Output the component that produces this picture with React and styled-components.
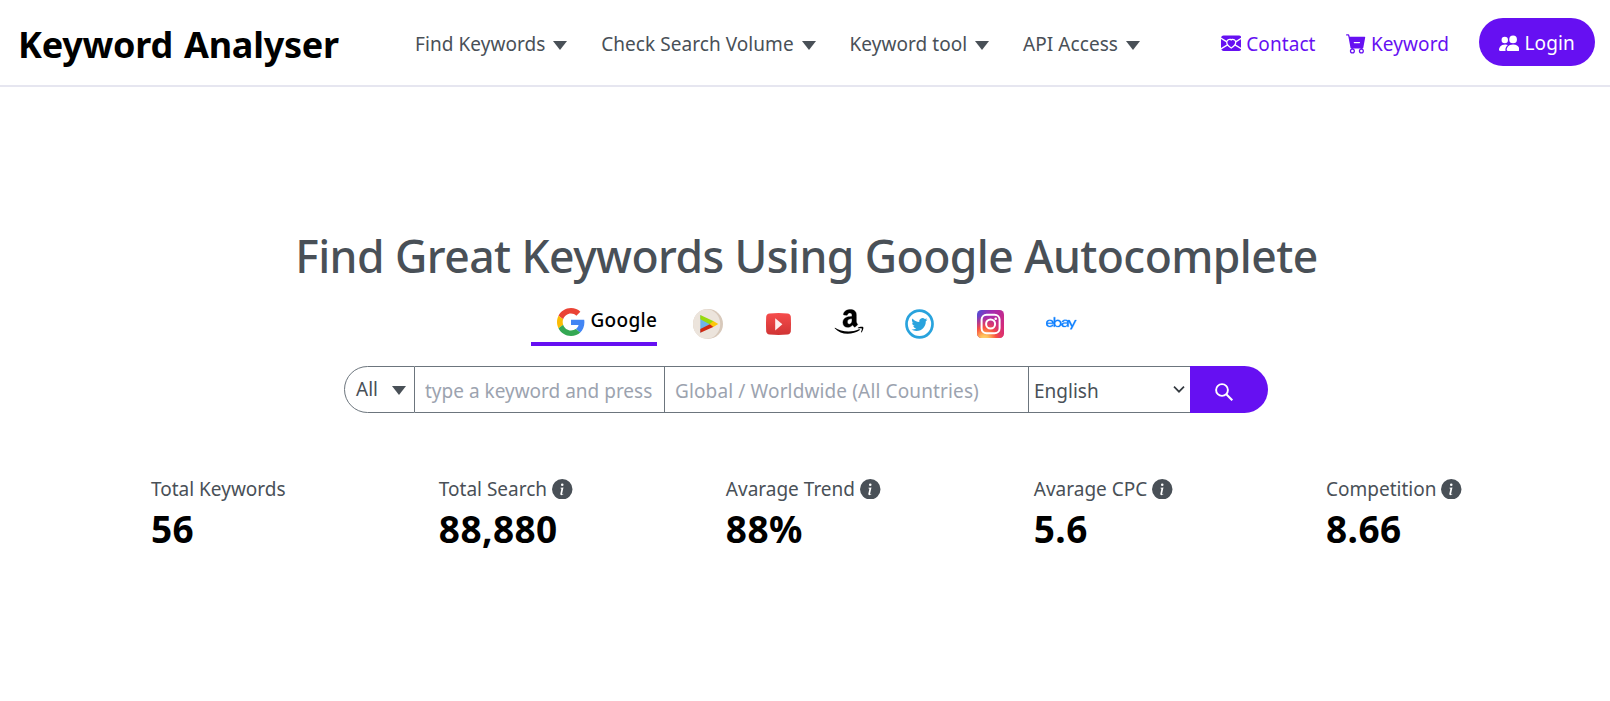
import React from 'react';
import styled, { createGlobalStyle, css } from 'styled-components';
import {
  BsEnvelopeHeartFill,
  BsCartDashFill,
  BsPeopleFill,
  BsInfoCircleFill,
} from 'react-icons/bs';
import { FaEbay } from 'react-icons/fa';

const color = {
  accent: '#6610f2',
  text: '#495057',
  muted: '#9ca3af',
  line: '#6c757d',
  rule: '#e6e6f0',
};

const GlobalStyle = createGlobalStyle`
  * { box-sizing: border-box; }
  body {
    margin: 0;
    background: #fff;
    color: ${color.text};
    font: 400 19px/28px "Noto Sans", "Open Sans", sans-serif;
    overflow: hidden;
  }
  svg { display: block; flex: none; }
`;

/* ---------- header ---------- */

const Header = styled.header`
  display: flex;
  align-items: center;
  height: 87px;
  padding: 0 15px 0 18px;
  border-bottom: 2px solid ${color.rule};
`;

const Logo = styled.h1`
  margin: 0;
  width: 397px;
  padding-top: 4px;
  font-size: 36px;
  line-height: 48px;
  font-weight: 700;
  letter-spacing: -0.25px;
  word-spacing: 2px;
  color: #000;
  white-space: nowrap;
`;

const Nav = styled.nav`
  display: flex;
  gap: 33.8px;
  padding-top: 2px;
`;

const NavItem = styled.a`
  display: flex;
  align-items: center;
  gap: 8px;
  letter-spacing: 0.06px;
  white-space: nowrap;
`;

const Caret = styled.span`
  margin-top: 3px;
  border: 7.5px solid transparent;
  border-top: 9px solid ${color.text};
  border-bottom: 0;
`;

const Actions = styled.div`
  display: flex;
  align-items: center;
  gap: 30px;
  margin-left: auto;
`;

const ActionLink = styled.a`
  display: flex;
  align-items: center;
  gap: 5px;
  padding-top: 2px;
  color: ${color.accent};
  letter-spacing: 0.08px;

  svg {
    font-size: 20.5px;
  }
`;

const LoginButton = styled.button`
  display: flex;
  align-items: center;
  gap: 5px;
  height: 48px;
  margin-bottom: 1px;
  padding: 0 20px;
  border: 0;
  border-radius: 24px;
  background: ${color.accent};
  color: #fff;
  font: inherit;
  letter-spacing: 0.15px;

  svg {
    font-size: 20.5px;
    margin-top: 2px;
  }
  span {
    padding-top: 2px;
  }
`;

/* ---------- hero ---------- */

const Hero = styled.main`
  display: flex;
  flex-direction: column;
  align-items: center;
  padding-top: 138px;
`;

const Heading = styled.h2`
  margin: 0;
  padding-left: 3px;
  font-size: 44.5px;
  line-height: 61px;
  font-weight: 500;
  letter-spacing: -0.56px;
  white-space: nowrap;
`;

const Tabs = styled.div`
  display: flex;
  gap: 35.5px;
  height: 46px;
  margin-top: 14px;
  padding-right: 3px;
`;

const ActiveTab = styled.div`
  display: flex;
  align-items: flex-start;
  gap: 6px;
  width: 126.5px;
  padding: 6px 0 0 26px;
  border-bottom: 4px solid ${color.accent};
  color: #000;
  font-weight: 500;
  letter-spacing: 0.3px;

  svg {
    margin-top: 2px;
  }
`;

const SourceList = styled.div`
  display: flex;
  gap: 40.8px;
  height: 48px;
`;

const Source = styled.a`
  display: flex;
  align-items: center;
  justify-content: center;
  width: 30px;
`;

const EbayIcon = styled(FaEbay)`
  font-size: 30.5px;
  color: #0f80ff;
  stroke: #0f80ff;
  stroke-width: 6px;
  margin-bottom: 2px;
`;

/* ---------- search bar ---------- */

const SearchBar = styled.form`
  display: flex;
  height: 47px;
  margin-top: 20px;
  margin-left: 2px;
`;

const cell = css`
  border: 1px solid ${color.line};
  border-left: 0;
  background: #fff;
`;

const Scope = styled.div`
  ${cell}
  display: flex;
  align-items: center;
  justify-content: space-between;
  width: 71px;
  padding: 0 8px 2px 11px;
  border-left: 1px solid ${color.line};
  border-radius: 24px 0 0 24px;
`;

const Field = styled.input`
  ${cell}
  width: ${(p) => p.$width}px;
  padding: 3px 0 0 10px;
  border-radius: 0;
  outline: 0;
  font: inherit;
  letter-spacing: ${(p) => p.$tracking || 0}px;
  color: ${color.text};

  &::placeholder {
    color: ${color.muted};
    opacity: 1;
  }
`;

const Language = styled.label`
  ${cell}
  display: flex;
  align-items: center;
  width: 161px;
  padding-right: 5px;
  border-right: 0;
`;

const LanguageSelect = styled.select`
  flex: 1;
  padding: 3px 0 0 5px;
  border: 0;
  outline: 0;
  appearance: none;
  background: none;
  font: inherit;
  color: ${color.text};
`;

const SearchButton = styled.button`
  display: flex;
  align-items: center;
  width: 78px;
  padding: 5px 0 0 24.5px;
  border: 0;
  border-radius: 0 24px 24px 0;
  background: ${color.accent};
  color: #fff;
`;

/* ---------- stats ---------- */

const Stats = styled.section`
  display: flex;
  justify-content: space-between;
  width: 100%;
  margin-top: 62px;
  padding: 0 148px 0 151px;
`;

const StatLabel = styled.div`
  display: flex;
  align-items: center;
  gap: 5px;
  white-space: nowrap;

  svg {
    font-size: 20.5px;
  }
`;

const StatValue = styled.div`
  padding-top: 1px;
  font-size: 37px;
  line-height: 49px;
  font-weight: 700;
  letter-spacing: 0.4px;
  color: #000;
`;

/* ---------- brand icons ---------- */

const GoogleIcon = () => (
  <svg width="28" height="28" viewBox="0 0 48 48">
    <path fill="#EA4335" d="M24 9.5c3.54 0 6.71 1.22 9.21 3.6l6.85-6.85C35.9 2.38 30.47 0 24 0 14.62 0 6.51 5.38 2.56 13.22l7.98 6.19C12.43 13.72 17.74 9.5 24 9.5z" />
    <path fill="#4285F4" d="M46.98 24.55c0-1.57-.15-3.09-.38-4.55H24v9.02h12.94c-.58 2.96-2.26 5.48-4.78 7.18l7.73 6c4.51-4.18 7.09-10.36 7.09-17.65z" />
    <path fill="#FBBC05" d="M10.53 28.59c-.48-1.45-.76-2.99-.76-4.59s.27-3.14.76-4.59l-7.98-6.19C.92 16.46 0 20.12 0 24c0 3.88.92 7.54 2.56 10.78l7.97-6.19z" />
    <path fill="#34A853" d="M24 48c6.48 0 11.93-2.13 15.89-5.81l-7.73-6c-2.15 1.45-4.92 2.3-8.16 2.3-6.26 0-11.57-4.22-13.47-9.91l-7.98 6.19C6.51 42.62 14.62 48 24 48z" />
  </svg>
);

const PlayIcon = () => (
  <svg width="30" height="30" viewBox="0 0 30 30">
    <circle cx="15" cy="15" r="15" fill="#d8c9bb" />
    <ellipse cx="13.6" cy="15" rx="13.6" ry="14.8" fill="#ece4dc" />
    <path d="M7.3 6v18l10-9z" fill="#6db4ea" />
    <path d="M7.3 6l13.4 6.3-3.6 3.2-9.8-5.2z" fill="#98da0c" />
    <path d="M7.3 23.7l13.4-5.9-3.4-2.9-10 5z" fill="#cf2a12" />
    <path d="M20.3 12.1l5 2.9-5 3-3.5-3z" fill="#fcc80a" />
  </svg>
);

const YoutubeIcon = () => (
  <svg width="25" height="22" viewBox="0 0 25 22">
    <defs>
      <linearGradient id="yt" x2="0" y2="1">
        <stop offset="0" stopColor="#f64c4c" />
        <stop offset="1" stopColor="#d03434" />
      </linearGradient>
    </defs>
    <path d="M3.500 .4Q12.500 -.4 21.500 .4q3 .3 3.300 3.300.4 7.300 0 14.600-.3 3-3.300 3.300-9 .8-18 0-3-.3-3.300-3.300-.4-7.300 0-14.600Q.5.7 3.500 .4z" fill="url(#yt)" />
    <path d="M9.200 5.200v12.300l7.200-6.200z" fill="#fdeeee" />
  </svg>
);

const AmazonIcon = () => (
  <svg width="30" height="30" viewBox="0 0 30 30">
    <g transform="translate(4.600 .6) scale(1.460)">
      <path
        fillRule="evenodd"
        stroke="#000"
        strokeWidth=".25"
        d="M10.813 11.968c.157.083.36.074.5-.05l.005.005a90 90 0 0 1 1.623-1.405c.173-.143.143-.372.006-.563l-.125-.17c-.345-.465-.673-.906-.673-1.791v-3.300l.001-.335c.008-1.265.014-2.421-.933-3.305C10.404.274 9.060 0 8.030 0 6.017 0 3.770.750 3.296 3.240c-.047.264.143.404.316.443l2.054.220c.190-.009.330-.196.366-.387.176-.857.896-1.271 1.703-1.271.435 0 .929.160 1.188.550.264.390.260.910.257 1.376v.432q-.3.033-.621.065c-1.113.114-2.397.246-3.360.670C3.873 5.910 2.940 7.080 2.940 8.798c0 2.200 1.387 3.298 3.168 3.298 1.506 0 2.328-.354 3.489-1.540l.167.246c.274.405.456.675 1.047 1.166zM6.030 8.431C6.030 6.627 7.647 6.300 9.177 6.300v.570c.001.776.002 1.434-.396 2.133-.336.595-.870.961-1.465.961-.812 0-1.286-.619-1.286-1.533"
      />
    </g>
    <path d="M1 18.700c5.500 3.700 15.500 5.600 24 1.600.9-.3 1.300.3.600.9-3.200 2.300-7.600 3.500-12 3.500-5 0-9.400-1.900-12.700-5.300-.4-.4-.3-.9.1-.7z" />
    <path d="M23.900 18.700c1.400-1 4.900-1.100 5.400-.5.400.7-.4 3.900-1.900 5.200-.3.200-.6.100-.4-.3.400-1 1.200-3 .9-3.500-.4-.5-2.700-.4-3.800-.3-.4 0-.5-.3-.2-.6z" />
  </svg>
);

const TwitterIcon = () => (
  <svg width="29" height="30" viewBox="0 0 29 30">
    <ellipse cx="14.500" cy="15" rx="13" ry="13.400" fill="none" stroke="#29a3dd" strokeWidth="2.700" />
    <path
      transform="translate(6.400 7)"
      fill="#29a3dd"
      d="M5.026 15c6.038 0 9.341-5.003 9.341-9.334q.002-.211-.006-.422A6.700 6.700 0 0 0 16 3.542a6.700 6.700 0 0 1-1.889.518 3.300 3.300 0 0 0 1.447-1.817 6.500 6.500 0 0 1-2.087.793A3.286 3.286 0 0 0 7.875 6.030a9.320 9.320 0 0 1-6.767-3.429 3.290 3.290 0 0 0 1.018 4.382A3.300 3.300 0 0 1 .640 6.575v.045a3.290 3.290 0 0 0 2.632 3.218 3.200 3.200 0 0 1-.865.115 3 3 0 0 1-.614-.057 3.280 3.280 0 0 0 3.067 2.277A6.600 6.600 0 0 1 .780 13.580a6 6 0 0 1-.780-.045A9.340 9.340 0 0 0 5.026 15"
    />
  </svg>
);

const InstagramIcon = () => (
  <svg width="27" height="28" viewBox="0 0 27 28">
    <defs>
      <linearGradient id="igBase" x1="0" y1="0" x2="1" y2=".6">
        <stop offset="0" stopColor="#4a50d6" />
        <stop offset=".4" stopColor="#a12cb4" />
        <stop offset="1" stopColor="#d62a78" />
      </linearGradient>
      <radialGradient id="igGlow" cx=".27" cy="1.080" r=".9">
        <stop offset="0" stopColor="#ffdc7d" />
        <stop offset=".2" stopColor="#ffc05a" />
        <stop offset=".5" stopColor="#f9513f" />
        <stop offset="1" stopColor="#d62a78" stopOpacity="0" />
      </radialGradient>
    </defs>
    <rect width="27" height="28" rx="4.500" fill="url(#igBase)" />
    <rect width="27" height="28" rx="4.500" fill="url(#igGlow)" />
    <g fill="none" stroke="#fff" strokeWidth="2">
      <rect x="4.600" y="4.800" width="18" height="18.400" rx="5" />
      <circle cx="13.600" cy="14" r="4.500" />
    </g>
    <circle cx="18.700" cy="8.800" r="1.300" fill="#fff" />
  </svg>
);

const Chevron = () => (
  <svg width="12" height="8" viewBox="0 0 12 8">
    <path d="M1 .7l5 5 5-5" fill="none" stroke="#343a40" strokeWidth="1.700" />
  </svg>
);

const SearchIcon = () => (
  <svg width="18" height="18" viewBox="0 0 18 18" fill="none" stroke="#fff">
    <circle cx="7" cy="7" r="5.900" strokeWidth="1.900" />
    <path d="M11.300 11.300l6 6" strokeWidth="2.100" />
  </svg>
);

/* ---------- page ---------- */

const menus = ['Find Keywords', 'Check Search Volume', 'Keyword tool', 'API Access'];

const sources = [
  ['play', PlayIcon],
  ['youtube', YoutubeIcon],
  ['amazon', AmazonIcon],
  ['twitter', TwitterIcon],
  ['instagram', InstagramIcon],
  ['ebay', EbayIcon],
];

const stats = [
  { label: 'Total Keywords', value: '56' },
  { label: 'Total Search', value: '88,880', info: true },
  { label: 'Avarage Trend', value: '88%', info: true },
  { label: 'Avarage CPC', value: '5.6', info: true },
  { label: 'Competition', value: '8.66', info: true },
];

export default function App() {
  return (
    <>
      <GlobalStyle />
      <Header>
        <Logo>Keyword Analyser</Logo>
        <Nav>
          {menus.map((menu) => (
            <NavItem key={menu}>
              {menu}
              <Caret />
            </NavItem>
          ))}
        </Nav>
        <Actions>
          <ActionLink>
            <BsEnvelopeHeartFill />
            Contact
          </ActionLink>
          <ActionLink>
            <BsCartDashFill />
            Keyword
          </ActionLink>
          <LoginButton>
            <BsPeopleFill />
            <span>Login</span>
          </LoginButton>
        </Actions>
      </Header>

      <Hero>
        <Heading>Find Great Keywords Using Google Autocomplete</Heading>

        <Tabs>
          <ActiveTab>
            <GoogleIcon />
            Google
          </ActiveTab>
          <SourceList>
            {sources.map(([name, Icon]) => (
              <Source key={name}>
                <Icon />
              </Source>
            ))}
          </SourceList>
        </Tabs>

        <SearchBar>
          <Scope>
            All
            <Caret />
          </Scope>
          <Field $width={250} placeholder="type a keyword and press" />
          <Field $width={364} $tracking={0.13} placeholder="Global / Worldwide (All Countries)" />
          <Language>
            <LanguageSelect defaultValue="English">
              <option>English</option>
            </LanguageSelect>
            <Chevron />
          </Language>
          <SearchButton type="button">
            <SearchIcon />
          </SearchButton>
        </SearchBar>

        <Stats>
          {stats.map(({ label, value, info }) => (
            <div key={label}>
              <StatLabel>
                {label}
                {info && <BsInfoCircleFill />}
              </StatLabel>
              <StatValue>{value}</StatValue>
            </div>
          ))}
        </Stats>
      </Hero>
    </>
  );
}
